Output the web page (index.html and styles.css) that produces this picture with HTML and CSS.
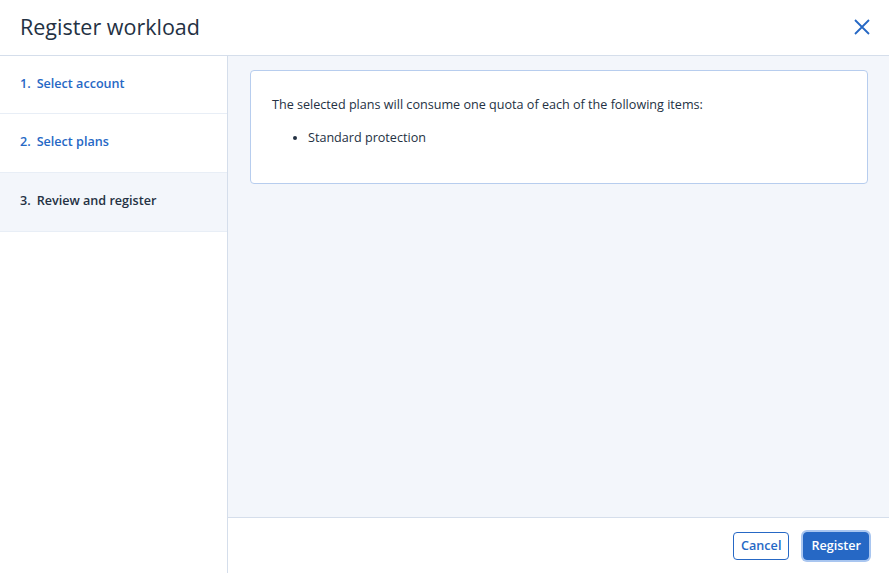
FILE: index.html
```html
<!DOCTYPE html>
<html lang="en">
<head>
    <meta charset="UTF-8">
    <meta name="viewport" content="width=device-width, initial-scale=1.0">
    <title>Register workload</title>
    <link rel="stylesheet" href="styles.css">
</head>
<body>
    <div class="dialog">
        <div class="dialog-header">
            <h1>Register workload</h1>
            <button class="close-btn" aria-label="Close">
                <svg width="16" height="16" viewBox="0 0 16 16">
                    <path d="M1 1 L15 15 M15 1 L1 15" stroke="#2668c5" stroke-width="1.8" fill="none"/>
                </svg>
            </button>
        </div>
        <div class="dialog-body">
            <div class="steps">
                <div class="step done"><span class="num">1.</span>Select account</div>
                <div class="step done"><span class="num">2.</span>Select plans</div>
                <div class="step active"><span class="num">3.</span>Review and register</div>
            </div>
            <div class="main">
                <div class="content">
                    <div class="card">
                        <p>The selected plans will consume one quota of each of the following items:</p>
                        <ul>
                            <li>Standard protection</li>
                        </ul>
                    </div>
                </div>
                <div class="footer">
                    <button class="btn btn-secondary">Cancel</button>
                    <button class="btn btn-primary">Register</button>
                </div>
            </div>
        </div>
    </div>
</body>
</html>
```

FILE: styles.css
```css
* {
    box-sizing: border-box;
}

html, body {
    height: 100%;
}

body {
    margin: 0;
    background-color: #ffffff;
    color: #243143;
    font-family: 'Open Sans', 'Noto Sans', sans-serif;
    font-size: 12.6px;
}

.dialog {
    display: flex;
    flex-direction: column;
    height: 100vh;
}

.dialog-header {
    height: 56px;
    display: flex;
    align-items: center;
    justify-content: space-between;
    padding: 0 19px 2px 20px;
    border-bottom: 1px solid #d5deeb;
    flex-shrink: 0;
}

.dialog-header h1 {
    margin: 0;
    font-size: 21.5px;
    font-weight: 400;
    color: #243143;
}

.close-btn {
    background: none;
    border: none;
    padding: 0;
    width: 16px;
    height: 16px;
    cursor: pointer;
    display: flex;
}

.dialog-body {
    flex: 1;
    display: flex;
    min-height: 0;
}

.steps {
    width: 228px;
    flex-shrink: 0;
    border-right: 1px solid #d5deeb;
}

.step {
    height: 59px;
    display: flex;
    align-items: center;
    padding: 0 20px 3px;
    border-bottom: 1px solid #e8eef6;
    font-weight: 600;
    color: #243143;
}

.step:first-child {
    height: 58px;
}

.step .num {
    margin-right: 6px;
}

.step.done {
    color: #2668c5;
}

.step.active {
    background-color: #f3f6fb;
}

.main {
    flex: 1;
    display: flex;
    flex-direction: column;
    background-color: #f3f6fb;
}

.content {
    flex: 1;
    padding: 14px 21px 14px 22px;
}

.card {
    background: #ffffff;
    border: 1px solid #b7cdee;
    border-radius: 4px;
    padding: 25px 21px 36px;
}

.card p {
    margin: 0 0 15px;
    line-height: 18px;
}

.card ul {
    margin: 0;
    padding-left: 36px;
    line-height: 18px;
}

.footer {
    height: 56px;
    background: #ffffff;
    border-top: 1px solid #d5deeb;
    display: flex;
    align-items: center;
    justify-content: flex-end;
    gap: 14px;
    padding: 0 20px 0 0;
    flex-shrink: 0;
}

.btn {
    height: 28px;
    padding: 0 7px;
    font-family: inherit;
    font-size: 12.6px;
    font-weight: 600;
    border-radius: 4px;
    cursor: pointer;
}

.btn-secondary {
    background: #ffffff;
    color: #2668c5;
    border: 1px solid #2668c5;
}

.btn-primary {
    background: #2668c5;
    color: #ffffff;
    border: 1px solid #2668c5;
    box-shadow: 0 0 0 2px #a9c6f0;
}
```
